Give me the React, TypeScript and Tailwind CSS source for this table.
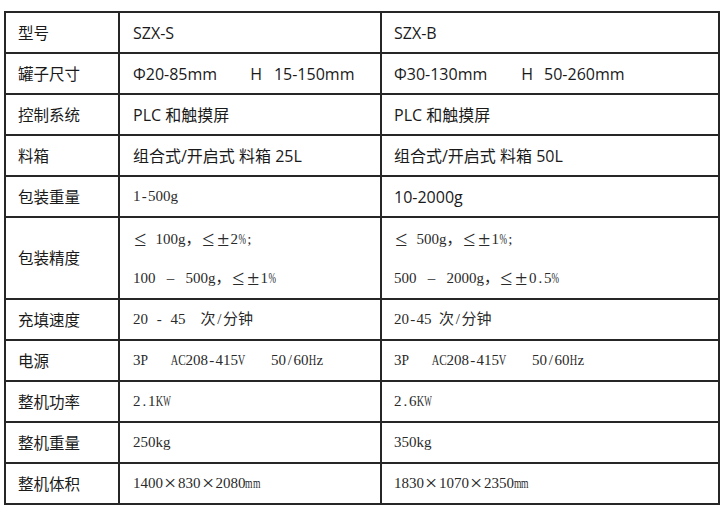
import React from "react";

const SCALE: Record<string, string> = {
  m: "scale-x-[0.64]",
  H: "scale-x-[0.69]",
  A: "scale-x-[0.69]",
  C: "scale-x-[0.75]",
  V: "scale-x-[0.69]",
  P: "scale-x-[0.9]",
  K: "scale-x-[0.69]",
  W: "scale-x-[0.53]",
  "%": "scale-x-[0.6]",
};

const BIG: Record<string, boolean> = { "≤": true, "±": true, "×": true };

function Sim({ t }: { t: string }) {
  return (
    <span className="inline-flex items-baseline whitespace-pre">
      {[...t].map((c, i) => {
        const code = c.charCodeAt(0);
        if (c === " ") return <span key={i} className="inline-block w-[7.5px]" />;
        if (code < 128) {
          return (
            <span key={i} className="inline-flex w-[7.5px] justify-center">
              <span className={`inline-block ${SCALE[c] ?? ""}`}>{c}</span>
            </span>
          );
        }
        if (BIG[c]) {
          return (
            <span key={i} className="inline-flex w-[15px] justify-center">
              <span className="inline-block scale-[1.45]">{c}</span>
            </span>
          );
        }
        return (
          <span key={i} className="inline-flex w-[15px] justify-center">
            {c}
          </span>
        );
      })}
    </span>
  );
}

function Serif({ children }: { children: React.ReactNode }) {
  return (
    <div className="font-['Liberation_Serif','Noto_Sans_CJK_SC',serif] text-[15px] text-[#2a2a2a] whitespace-pre">
      {children}
    </div>
  );
}

function Sans({ children, size = "md" }: { children: React.ReactNode; size?: "md" }) {
  return (
    <div className="font-['Open_Sans','Noto_Sans_CJK_SC',sans-serif] text-[16px] text-[#1a1a1a] whitespace-pre">
      {children}
    </div>
  );
}

function Row({
  label,
  a,
  b,
  tall = false,
}: {
  label: string;
  a: React.ReactNode;
  b: React.ReactNode;
  tall?: boolean;
}) {
  const h = tall ? "h-[82px]" : "h-[41px]";
  return (
    <div className={`flex ${h}`}>
      <div className="w-[114px] border-r-2 border-b-2 border-[#262626] pl-[12px] flex items-center font-['Noto_Sans_CJK_SC',sans-serif] text-[15.5px] text-[#1a1a1a]">
        {label}
      </div>
      <div className="w-[262px] border-r-2 border-b-2 border-[#262626] pl-[13px] flex items-center">
        {a}
      </div>
      <div className="w-[338px] border-r-2 border-b-2 border-[#262626] pl-[12px] flex items-center">
        {b}
      </div>
    </div>
  );
}

export default function App() {
  return (
    <div className="w-[725px] h-[518px] bg-white overflow-hidden">
      <div className="ml-[4px] mt-[11px] w-[716px] border-l-2 border-t-2 border-[#262626]">
        <Row label="型号" a={<Sans>SZX-S</Sans>} b={<Sans>SZX-B</Sans>} />
        <Row
          label="罐子尺寸"
          a={
            <Sans>
              Φ20-85mm<span className="ml-[33px]">H</span>
              <span className="ml-[12px]">15-150mm</span>
            </Sans>
          }
          b={
            <Sans>
              Φ30-130mm<span className="ml-[34px]">H</span>
              <span className="ml-[11px]">50-260mm</span>
            </Sans>
          }
        />
        <Row label="控制系统" a={<Sans>PLC 和触摸屏</Sans>} b={<Sans>PLC 和触摸屏</Sans>} />
        <Row
          label="料箱"
          a={<Sans>组合式/开启式 料箱 25L</Sans>}
          b={<Sans>组合式/开启式 料箱 50L</Sans>}
        />
        <Row
          label="包装重量"
          a={
            <Serif>
              <Sim t="1-500g" />
            </Serif>
          }
          b={<Sans>10-2000g</Sans>}
        />
        <Row
          tall
          label="包装精度"
          a={
            <Serif>
              <div className="flex flex-col pt-[2px]">
                <div className="leading-[39px]">
                  <Sim t="≤ 100g，≤±2%;" />
                </div>
                <div className="leading-[39px]">
                  <Sim t="100 – 500g，≤±1%" />
                </div>
              </div>
            </Serif>
          }
          b={
            <Serif>
              <div className="flex flex-col pt-[2px]">
                <div className="leading-[39px]">
                  <Sim t="≤ 500g，≤±1%;" />
                </div>
                <div className="leading-[39px]">
                  <Sim t="500 – 2000g，≤±0.5%" />
                </div>
              </div>
            </Serif>
          }
        />
        <Row
          label="充填速度"
          a={
            <Serif>
              <Sim t="20 - 45  次/分钟" />
            </Serif>
          }
          b={
            <Serif>
              <Sim t="20-45 次/分钟" />
            </Serif>
          }
        />
        <Row
          label="电源"
          a={
            <Serif>
              <Sim t="3P   AC208-415V   " />
              <span className="inline-block w-[3px]" />
              <Sim t="50/60Hz" />
            </Serif>
          }
          b={
            <Serif>
              <Sim t="3P   AC208-415V   " />
              <span className="inline-block w-[3px]" />
              <Sim t="50/60Hz" />
            </Serif>
          }
        />
        <Row
          label="整机功率"
          a={
            <Serif>
              <Sim t="2.1KW" />
            </Serif>
          }
          b={
            <Serif>
              <Sim t="2.6KW" />
            </Serif>
          }
        />
        <Row
          label="整机重量"
          a={
            <Serif>
              <Sim t="250kg" />
            </Serif>
          }
          b={
            <Serif>
              <Sim t="350kg" />
            </Serif>
          }
        />
        <Row
          label="整机体积"
          a={
            <Serif>
              <Sim t="1400×830×2080mm" />
            </Serif>
          }
          b={
            <Serif>
              <Sim t="1830×1070×2350mm" />
            </Serif>
          }
        />
      </div>
    </div>
  );
}
